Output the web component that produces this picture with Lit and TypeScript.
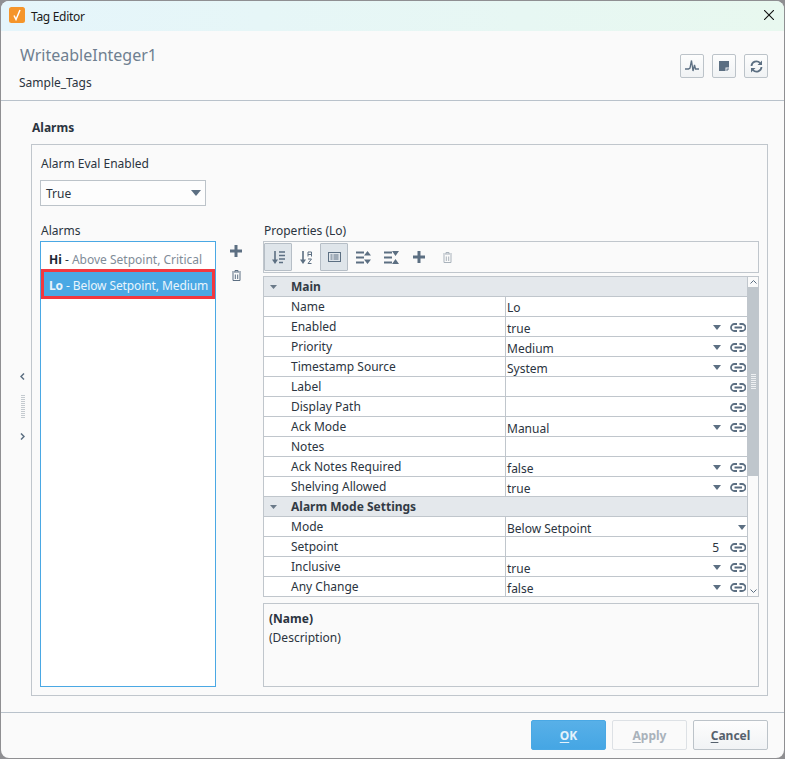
import { LitElement, css, html, svg } from "lit";
import { customElement } from "lit/decorators.js";

type Row = { label: string; value?: string; combo?: boolean; link?: boolean; right?: boolean; section?: boolean };

const ROWS: Row[] = [
  { label: "Main", section: true },
  { label: "Name", value: "Lo" },
  { label: "Enabled", value: "true", combo: true, link: true },
  { label: "Priority", value: "Medium", combo: true, link: true },
  { label: "Timestamp Source", value: "System", combo: true, link: true },
  { label: "Label", link: true },
  { label: "Display Path", link: true },
  { label: "Ack Mode", value: "Manual", combo: true, link: true },
  { label: "Notes" },
  { label: "Ack Notes Required", value: "false", combo: true, link: true },
  { label: "Shelving Allowed", value: "true", combo: true, link: true },
  { label: "Alarm Mode Settings", section: true },
  { label: "Mode", value: "Below Setpoint", combo: true },
  { label: "Setpoint", value: "5", right: true, link: true },
  { label: "Inclusive", value: "true", combo: true, link: true },
  { label: "Any Change", value: "false", combo: true, link: true },
];

const icon = (w: number, h: number, body: unknown) => html`<svg width=${w} height=${h} viewBox="0 0 ${w} ${h}">${body}</svg>`;

const SLATE = "#5c6f82";
const caret = icon(8, 5, svg`<path d="M0 0h8L4 5z" fill=${SLATE}/>`);
const bigCaret = icon(10, 6, svg`<path d="M0 0h10L5 6z" fill=${SLATE}/>`);
const link = icon(16, 9, svg`<path d="M7 1H4.500a3.500 3.500 0 0 0 0 7H7M9.500 1H12a3.500 3.500 0 0 1 0 7H9.500M4.500 4.500h7.500" fill="none" stroke=${SLATE} stroke-width="1.800"/>`);
const plus = (c: string) => icon(12, 12, svg`<path d="M6 0v12M0 6h12" stroke=${c} stroke-width="3"/>`);
const trash = (c: string) => icon(9, 11, svg`<path d="M0 2h9M3 1.800V.5h3v1.300M1 3v7.500h7V3M3.300 4.500v4.500M5.700 4.500v4.500" fill="none" stroke=${c} stroke-width="1"/>`);

@customElement("app-root")
export class AppRoot extends LitElement {
  static styles = css`
    :host {
      display: block;
      width: 785px;
      height: 759px;
      background: #8f8f92;
      font-family: "Noto Sans", sans-serif;
      font-size: 12px;
      color: #2b3440;
      padding: 1px 1px 1px 1px;
      box-sizing: border-box;
    }
    .window {
      height: 757px;
      width: 783px;
      background: #fafafa;
      border-radius: 8px;
      overflow: hidden;
      display: flex;
      flex-direction: column;
    }
    .titlebar {
      height: 30px;
      flex: none;
      box-sizing: border-box;
      display: flex;
      align-items: center;
      padding: 0 10px 2px 8px;
      gap: 6px;
      background: linear-gradient(90deg, #e5f5fb, #e8f8ef);
      color: #1a1a1a;
    }
    .titlebar span:first-of-type { letter-spacing: -0.3px; position: relative; top: 1px; }
    .titlebar .grow { flex: 1; }
    .head {
      height: 70px;
      flex: none;
      box-sizing: border-box;
      border-bottom: 1px solid #b9c2cb;
      display: flex;
      justify-content: space-between;
      padding: 13px 16px 0 18px;
    }
    .tag { font-size: 16px; line-height: 22px; color: #6f7f90; margin-left: 1px; }
    .folder { margin-top: 8px; line-height: 17px; }
    .tools { display: flex; gap: 8px; margin-top: 10px; align-self: flex-start; }
    .tool {
      width: 24px;
      height: 24px;
      box-sizing: border-box;
      border: 1px solid #bcc3c9;
      border-radius: 2px;
      background: linear-gradient(#fdfdfd, #f0f2f4);
      display: flex;
      align-items: center;
      justify-content: center;
    }
    .body { flex: 1; min-height: 0; display: flex; }
    .rail {
      width: 30px;
      flex: none;
      box-sizing: border-box;
      display: flex;
      flex-direction: column;
      align-items: flex-end;
      justify-content: center;
      gap: 15px;
      padding-right: 6px;
    }
    .grip-v { width: 4px; height: 23px; background: repeating-linear-gradient(#c4cacf 0 1px, transparent 1px 2px); }
    .main { flex: 1; min-width: 0; padding: 18px 16px 16px 0; display: flex; flex-direction: column; }
    .section-title { font-weight: 700; line-height: 17px; margin: 0 0 8px 1px; }
    .panel {
      flex: 1;
      box-sizing: border-box;
      border: 1px solid #c0c6cc;
      padding: 10px 8px 8px 8px;
      display: flex;
      flex-direction: column;
      min-height: 0;
    }
    .label { line-height: 17px; padding-left: 1px; }
    .eval {
      margin-top: 8px;
      width: 166px;
      height: 26px;
      flex: none;
      box-sizing: border-box;
      border: 1px solid #bcc3c9;
      background: #fdfdfd;
      display: flex;
      align-items: center;
      justify-content: space-between;
      padding: 0 4px 0 5px;
    }
    .columns { flex: 1; display: flex; margin-top: 16px; min-height: 0; }
    .alarms { width: 176px; flex: none; display: flex; flex-direction: column; }
    .list {
      flex: 1;
      margin-top: 2px;
      box-sizing: border-box;
      border: 1px solid #4aa8e4;
      background: #fff;
      padding-top: 8px;
    }
    .item { height: 20px; line-height: 20px; padding-left: 8px; white-space: nowrap; color: #7f8c98; }
    .item b { color: #1d2733; }
    .item i { font-style: normal; color: #2b3440; }
    .item.selected {
      height: 30px;
      line-height: 27px;
      box-sizing: border-box;
      border: 3px solid #f2383f;
      background: #4aa8e4;
      color: #e9f5fc;
      padding-left: 5px;
      margin-top: -1px;
      letter-spacing: -0.1px;
    }
    .item.selected b { color: #e9f5fc; }
    .actions {
      width: 47px;
      flex: none;
      display: flex;
      flex-direction: column;
      align-items: center;
      gap: 13px;
      padding: 23px 7px 0 0;
      box-sizing: border-box;
    }
    .props { flex: 1; display: flex; flex-direction: column; min-width: 0; }
    .toolbar {
      margin-top: 2px;
      height: 32px;
      flex: none;
      box-sizing: border-box;
      border: 1px solid #c0c6cc;
      display: flex;
      align-items: center;
    }
    .tb {
      width: 28px;
      height: 28px;
      box-sizing: border-box;
      display: flex;
      align-items: center;
      justify-content: center;
    }
    .tb.on { background: #dfe5ea; border: 1px solid #b6bec6; border-radius: 1px; }
    .tb.sep { margin-right: 1px; }
    .sheet {
      margin-top: 3px;
      height: 321px;
      flex: none;
      box-sizing: border-box;
      border: 1px solid #c0c6cc;
      display: flex;
    }
    .rows { flex: 1; min-width: 0; }
    .row {
      height: 20px;
      box-sizing: border-box;
      border-bottom: 1px solid #c0c6cc;
      background: #fff;
      display: grid;
      grid-template-columns: 241px 1fr;
      line-height: 20px;
    }
    .row:last-child { height: 19px; border-bottom: 0; }
    .row.section {
      background: #e4e8ec;
      font-weight: 700;
      display: flex;
      align-items: center;
      padding-left: 6px;
      gap: 14px;
      color: #333b45;
    }
    .name { padding-left: 27px; }
    .cell {
      border-left: 1px solid #c0c6cc;
      display: flex;
      align-items: center;
      padding: 0 1px 0 1px;
    }
    .cell .value { flex: 1; position: relative; top: 1px; }
    .cell.combo .value { top: 2px; }
    .cell .value.right { text-align: right; padding-right: 11px; }
    .cell .caret { margin-right: 9px; display: flex; }
    .cell.plain .caret { margin-right: 0; }
    .cell .linkicon { display: flex; }
    .scroll {
      width: 11px;
      flex: none;
      box-sizing: border-box;
      border-left: 1px solid #c0c6cc;
      display: flex;
      flex-direction: column;
      align-items: center;
    }
    .arrow { height: 10px; flex: none; display: flex; align-items: center; justify-content: center; width: 100%; }
    .thumb {
      width: 100%;
      height: 189px;
      flex: none;
      background: #bfc6cc;
      display: flex;
      align-items: center;
      justify-content: center;
    }
    .grip { width: 5px; height: 16px; background: repeating-linear-gradient(#eef0f2 0 1px, transparent 1px 2px); }
    .track { flex: 1; }
    .desc {
      flex: 1;
      margin-top: 6px;
      box-sizing: border-box;
      border: 1px solid #c0c6cc;
      padding: 5px 5px;
      line-height: 19px;
    }
    .desc b { display: block; }
    .footer {
      height: 46px;
      flex: none;
      box-sizing: border-box;
      border-top: 1px solid #b9c2cb;
      display: flex;
      justify-content: flex-end;
      gap: 6px;
      padding: 7px 16px 0 0;
    }
    .btn {
      width: 75px;
      height: 30px;
      box-sizing: border-box;
      border: 1px solid #bcc3c9;
      border-radius: 2px;
      background: linear-gradient(#fdfdfd, #f1f3f5);
      display: flex;
      align-items: center;
      justify-content: center;
      font-weight: 700;
      color: #56616d;
    }
    .btn u { text-underline-offset: 2px; }
    .btn.primary { background: linear-gradient(#58b0e8, #45a6e4); border-color: #4aa8e4; color: #e4f2fb; }
    .btn.disabled { color: #a9b2bb; border-color: #dde1e5; background: #fafafa; }
  `;

  private row(r: Row) {
    if (r.section) {
      return html`<div class="row section">
        <svg width="7" height="4" viewBox="0 0 7 4"><path d="M0 0h7L3.500 4z" fill="#6b7a89" /></svg>
        <span>${r.label}</span>
      </div>`;
    }
    return html`<div class="row">
      <div class="name">${r.label}</div>
      <div class="cell ${r.combo ? "combo" : ""} ${r.combo && !r.link ? "plain" : ""}">
        <span class="value ${r.right ? "right" : ""}">${r.value ?? ""}</span>
        ${r.combo ? html`<span class="caret">${caret}</span>` : ""}
        ${r.link ? html`<span class="linkicon">${link}</span>` : ""}
      </div>
    </div>`;
  }

  render() {
    return html`<div class="window">
      <div class="titlebar">
        <svg width="16" height="16" viewBox="0 0 16 16">
          <rect width="16" height="16" rx="2.500" fill="#f5952a" />
          <path d="M5 8.500 7 12.500 11 3" fill="none" stroke="#fff" stroke-width="1.500" />
        </svg>
        <span>Tag Editor</span>
        <span class="grow"></span>
        <svg width="10" height="10" viewBox="0 0 10 10"><path d="M0 0l10 10M10 0L0 10" stroke="#111" stroke-width="1.100" /></svg>
      </div>

      <div class="head">
        <div>
          <div class="tag">WriteableInteger1</div>
          <div class="folder">Sample_Tags</div>
        </div>
        <div class="tools">
          <div class="tool">${icon(14, 14, svg`<path d="M0 10h3.500L5 9 6.500 1.500 8 12 9.500 6 10.500 10H14" fill="none" stroke=${SLATE} stroke-width="1.300"/>`)}</div>
          <div class="tool">${icon(10, 10, svg`<path d="M0 0h10v6.500H6.500V10H0z" fill=${SLATE}/><path d="M7.500 7.500H10v1H8.500V10h-1z" fill=${SLATE}/>`)}</div>
          <div class="tool">${icon(13, 13, svg`<path d="M1.500 6A5 5 0 0 1 10 2.800M11.500 7A5 5 0 0 1 3 10.200" fill="none" stroke=${SLATE} stroke-width="1.800"/><path d="M12 .5V5H7.500zM1 12.500V8h4.500z" fill=${SLATE}/>`)}</div>
        </div>
      </div>

      <div class="body">
        <div class="rail">
          ${icon(5, 7, svg`<path d="M4 .5 1 3.500 4 6.500" fill="none" stroke=${SLATE} stroke-width="1.500"/>`)}
          <div class="grip-v"></div>
          ${icon(5, 7, svg`<path d="M1 .5 4 3.500 1 6.500" fill="none" stroke=${SLATE} stroke-width="1.500"/>`)}
        </div>
        <div class="main">
          <div class="section-title">Alarms</div>
          <div class="panel">
            <div class="label">Alarm Eval Enabled</div>
            <div class="eval"><span>True</span>${bigCaret}</div>
            <div class="columns">
              <div class="alarms">
                <div class="label">Alarms</div>
                <div class="list">
                  <div class="item"><b>Hi</b> <i>-</i> Above Setpoint, Critical</div>
                  <div class="item selected"><b>Lo</b> - Below Setpoint, Medium</div>
                </div>
              </div>
              <div class="actions">${plus(SLATE)}${trash(SLATE)}</div>
              <div class="props">
                <div class="label">Properties (Lo)</div>
                <div class="toolbar">
                  <div class="tb on">${icon(13, 13, svg`<path d="M3 0v10" stroke=${SLATE} stroke-width="1.600"/><path d="M0 8.500h6L3 13z" fill=${SLATE}/><path d="M7 1h6M7 4.500h6M7 8h6M7 11.500h4" stroke=${SLATE} stroke-width="1.500"/>`)}</div>
                  <div class="tb">${icon(13, 13, svg`<path d="M3 0v10" stroke=${SLATE} stroke-width="1.600"/><path d="M0 8.500h6L3 13z" fill=${SLATE}/><path d="M8 5.500V1h3.500v4.500M8 3.500h3.500M8 8h3.500L8 12.500h3.500" fill="none" stroke=${SLATE} stroke-width="1"/>`)}</div>
                  <div class="tb on sep">${icon(13, 10, svg`<rect x=".5" y=".5" width="12" height="9" fill="none" stroke=${SLATE}/><path d="M2.500 3h2M2.500 5h2M2.500 7h2M5.500 3h5M5.500 5h5M5.500 7h5" stroke=${SLATE}/>`)}</div>
                  <div class="tb">${icon(15, 13, svg`<path d="M0 1.500h8M0 6.500h8M0 11.500h8" stroke=${SLATE} stroke-width="1.800"/><path d="M11.500 0 15 4.500H8zM11.500 13 15 8.500H8z" fill=${SLATE}/>`)}</div>
                  <div class="tb">${icon(15, 13, svg`<path d="M0 1.500h8M0 6.500h8M0 11.500h8" stroke=${SLATE} stroke-width="1.800"/><path d="M8 0h7l-3.500 5zM8 13h7l-3.500-5z" fill=${SLATE}/>`)}</div>
                  <div class="tb">${plus(SLATE)}</div>
                  <div class="tb">${trash("#a9b2bb")}</div>
                </div>
                <div class="sheet">
                  <div class="rows">${ROWS.map((r) => this.row(r))}</div>
                  <div class="scroll">
                    <div class="arrow">${icon(7, 4, svg`<path d="M.5 3.500 3.500.5 6.500 3.500" fill="none" stroke=${SLATE}/>`)}</div>
                    <div class="thumb"><div class="grip"></div></div>
                    <div class="track"></div>
                    <div class="arrow">${icon(7, 4, svg`<path d="M.5.500 3.500 3.500 6.500.500" fill="none" stroke=${SLATE}/>`)}</div>
                  </div>
                </div>
                <div class="desc"><b>(Name)</b>(Description)</div>
              </div>
            </div>
          </div>
        </div>
      </div>

      <div class="footer">
        <div class="btn primary"><span><u>O</u>K</span></div>
        <div class="btn disabled"><span><u>A</u>pply</span></div>
        <div class="btn"><span><u>C</u>ancel</span></div>
      </div>
    </div>`;
  }
}
